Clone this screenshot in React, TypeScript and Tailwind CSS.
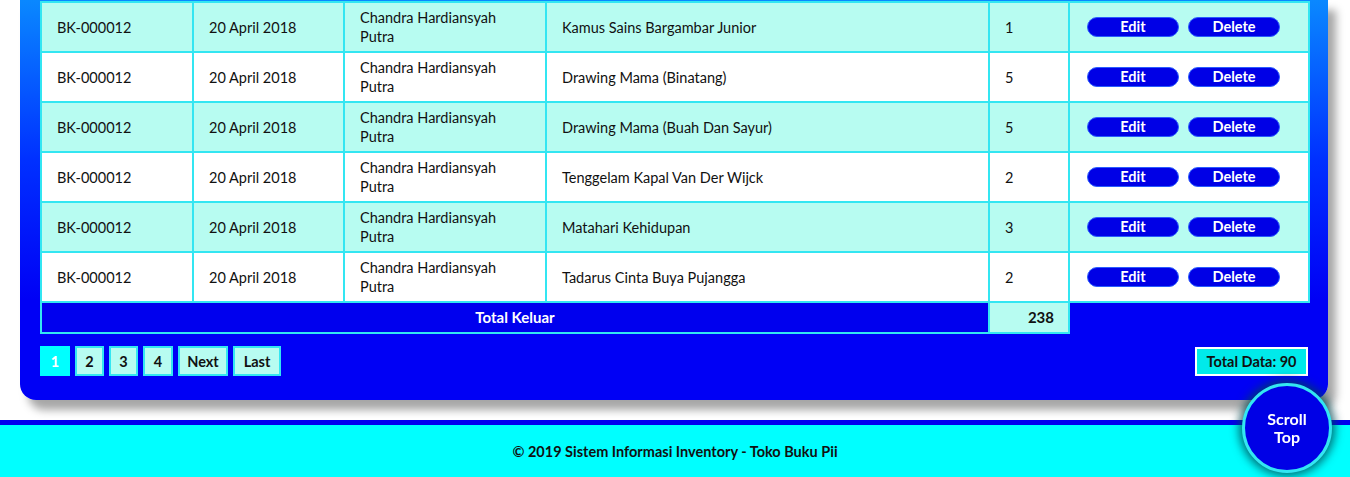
const rows = [
  { judul: 'Kamus Sains Bargambar Junior', qty: 1 },
  { judul: 'Drawing Mama (Binatang)', qty: 5 },
  { judul: 'Drawing Mama (Buah Dan Sayur)', qty: 5 },
  { judul: 'Tenggelam Kapal Van Der Wijck', qty: 2 },
  { judul: 'Matahari Kehidupan', qty: 3 },
  { judul: 'Tadarus Cinta Buya Pujangga', qty: 2 },
];

const cell = 'border-2 border-[#33e6f2] pl-[15px] pr-5 py-[5px] align-middle';
const page = 'flex h-[30px] items-center justify-center border-2 border-[#33e6f2] bg-[#b7fcf1]';
const btn = 'h-5 w-[92px] rounded-full border border-[#2a5cff] bg-[#0000e6] text-[14.5px] font-bold leading-none text-white';

export default function App() {
  return (
    <div className="min-h-[477px] bg-white font-['Lato',sans-serif] text-[14.5px] leading-[19px] text-[#111]">
      <div className="ml-5 mr-[22px] rounded-b-2xl bg-[linear-gradient(to_bottom,#0a88ff_0%,#0030ff_40%,#0000f5_75%)] px-5 pt-[1px] pb-6 shadow-[8px_10px_8px_rgba(0,0,0,0.35)]">
        <table className="w-[1268px] table-fixed border-collapse">
          <colgroup>
            <col className="w-[152px]" />
            <col className="w-[151px]" />
            <col className="w-[202px]" />
            <col className="w-[443px]" />
            <col className="w-[80px]" />
            <col className="w-[240px]" />
          </colgroup>
          <tbody>
            {rows.map((r, i) => (
              <tr key={i} className={i % 2 === 0 ? 'h-[50px] bg-[#b7fcf1]' : 'h-[50px] bg-white'}>
                <td className={cell}>BK-000012</td>
                <td className={cell}>20 April 2018</td>
                <td className={cell}>Chandra Hardiansyah Putra</td>
                <td className={cell}>{r.judul}</td>
                <td className={cell}>{r.qty}</td>
                <td className="border-2 border-[#33e6f2] pl-[17px] align-middle">
                  <div className="flex gap-[9px]">
                    <button className={btn}>Edit</button>
                    <button className={btn}>Delete</button>
                  </div>
                </td>
              </tr>
            ))}
            <tr className="h-[31px]">
              <td colSpan={4} className="border-2 border-[#33e6f2] bg-[#0000ee] text-center text-[15px] font-bold text-white">
                Total Keluar
              </td>
              <td className="border-2 border-[#33e6f2] bg-[#b7fcf1] pr-[14px] text-right text-[15px] font-bold">238</td>
            </tr>
          </tbody>
        </table>

        <div className="mt-[12px] flex items-center justify-between">
          <div className="flex gap-[5px] text-[14.5px] font-bold">
            <span className="flex h-[30px] w-[30px] items-center justify-center bg-[#00ffff] text-white">1</span>
            <span className={`${page} w-[29px]`}>2</span>
            <span className={`${page} w-[29px]`}>3</span>
            <span className={`${page} w-[30px]`}>4</span>
            <span className={`${page} w-[50px]`}>Next</span>
            <span className={`${page} w-[48px]`}>Last</span>
          </div>
          <div className="flex h-[29px] w-[113px] items-center justify-center border-2 border-white bg-[#00eaea] text-[14.5px] font-bold">
            Total Data: 90
          </div>
        </div>
      </div>

      <footer className="mt-5 flex h-[57px] items-center justify-center border-t-[5px] border-[#0000ee] bg-[#00ffff] text-[14.5px] font-bold">
        © 2019 Sistem Informasi Inventory - Toko Buku Pii
      </footer>

      <button className="fixed bottom-[4px] right-[18px] flex h-[90px] w-[90px] items-center justify-center rounded-full border-[3px] border-[#33e6f2] bg-[#0000e6] text-[16px] font-bold leading-[18px] text-white shadow-[0_0_10px_3px_rgba(0,70,80,0.8)]">
        Scroll
        <br />
        Top
      </button>
    </div>
  );
}
